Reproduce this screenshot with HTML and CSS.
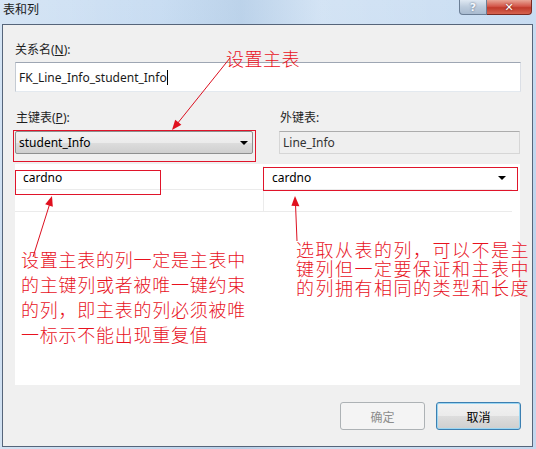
FILE: index.html
```html
<!DOCTYPE html>
<html lang="zh-CN">
<head>
<meta charset="utf-8">
<title>表和列</title>
<link rel="stylesheet" href="styles.css">
</head>
<body>
<div class="window">
  <div class="titlebar">
    <span class="title">表和列</span>
    <div class="caption-btns">
      <span class="cap-btn help">?</span>
      <span class="cap-btn close">✕</span>
    </div>
  </div>
  <div class="client">
    <label class="label">关系名(<u>N</u>):</label>
    <div class="textbox">FK_Line_Info_student_Info<span class="caret"></span></div>
    <div class="tables">
      <div class="col">
        <label class="label">主键表(<u>P</u>):</label>
        <div class="combo"><span>student_Info</span><span class="drop"></span></div>
      </div>
      <div class="col">
        <label class="label">外键表:</label>
        <div class="readonly">Line_Info</div>
      </div>
    </div>
    <div class="grid-panel">
      <div class="grid">
        <div class="cell">cardno</div>
        <div class="cell cell-combo"><span>cardno</span><span class="drop"></span></div>
        <div class="cell"></div>
        <div class="cell"></div>
      </div>
    </div>
    <div class="buttons">
      <button class="btn btn-disabled" disabled>确定</button>
      <button class="btn btn-default">取消</button>
    </div>
  </div>

  <div class="mark mark-pk"></div>
  <div class="mark mark-left"></div>
  <div class="mark mark-right"></div>

  <svg class="arrows" width="536" height="449" viewBox="0 0 536 449">
    <g stroke="#dc1020" stroke-width="1" fill="none">
      <line x1="230" y1="58" x2="177" y2="124"/>
      <line x1="33" y1="257" x2="50" y2="203"/>
      <line x1="297" y1="241" x2="295.5" y2="204"/>
    </g>
    <g fill="#e0101e">
      <polygon points="172,130 181.4,124.7 175.2,119.7"/>
      <polygon points="52,196 52.8,206.7 45.2,204.3"/>
      <polygon points="295,196 299.4,206.2 291.4,205.8"/>
    </g>
  </svg>

  <div class="note note-top">设置主表</div>
  <div class="note note-left">
    <div class="note-line">设置主表的列一定是主表中</div>
    <div class="note-line">的主键列或者被唯一键约束</div>
    <div class="note-line">的列，即主表的列必须被唯</div>
    <div class="note-line">一标示不能出现重复值</div>
  </div>
  <div class="note note-right">
    <div class="note-line">选取从表的列，可以不是主</div>
    <div class="note-line">键列但一定要保证和主表中</div>
    <div class="note-line">的列拥有相同的类型和长度</div>
  </div>
</div>
</body>
</html>
```
FILE: styles.css
```css
* { box-sizing: border-box; }
html, body { margin: 0; padding: 0; }
body {
  width: 536px;
  height: 449px;
  overflow: hidden;
  background: #c4d8ee;
  font-family: "Noto Sans", "Noto Sans CJK SC", sans-serif;
  font-size: 12px;
  color: #000;
}
.window {
  position: relative;
  width: 536px;
  height: 449px;
  background:
    linear-gradient(90deg, rgba(255,255,255,0.25) 0%, rgba(255,255,255,0) 30%, rgba(150,180,210,0.25) 45%, rgba(255,255,255,0.2) 60%, rgba(255,255,255,0) 100%),
    linear-gradient(180deg, #c9ddf2 0%, #bcd3ec 60%, #c4d8ee 100%);
}
.titlebar {
  height: 24px;
  display: flex;
  justify-content: space-between;
  align-items: flex-start;
  padding-left: 3px;
}
.title {
  font-family: "Noto Sans CJK SC", sans-serif;
  font-size: 12px;
  line-height: 18px;
  color: #1a1a1a;
}
.caption-btns {
  display: flex;
  margin-right: 4px;
}
.cap-btn {
  height: 15px;
  display: flex;
  align-items: center;
  justify-content: center;
  color: #fff;
  font-family: "DejaVu Sans", sans-serif;
  font-weight: bold;
  border: 1px solid #6b7e95;
  border-top: none;
}
.help {
  width: 28px;
  border-radius: 0 0 0 4px;
  background: linear-gradient(180deg, #dfe8f2 0%, #bccbdc 50%, #a9bbd0 100%);
  font-size: 11px;
  color: #f4f7fb;
  text-shadow: 0 0 2px #4a5d78;
}
.close {
  width: 45px;
  border-left: none;
  border-color: #7a2a22;
  border-radius: 0 0 4px 0;
  background: linear-gradient(180deg, #e8a697 0%, #d3574a 45%, #c03a2b 55%, #d66350 100%);
  font-size: 11px;
  text-shadow: 0 0 2px #5a1008;
}
.client {
  margin-left: 2px;
  width: 531px;
  height: 423px;
  border: 1px solid #56657a;
  background: #f0f0f0;
  padding: 17px 11px 16px 12px;
  display: flex;
  flex-direction: column;
}
.label {
  display: block;
  height: 16px;
  line-height: 16px;
  font-size: 12px;
  color: #1e1e1e;
}
.label u { text-decoration: underline; }
.textbox {
  margin-top: 4px;
  height: 30px;
  background: #fff;
  border: 1px solid #abadb3;
  border-top-color: #9ea6b3;
  border-left-color: #c5cbd3;
  border-right-color: #dbdfe6;
  border-bottom-color: #e3e9ef;
  padding-left: 3px;
  display: flex;
  align-items: center;
  font-size: 12px;
  color: #1a1a1a;
}
.caret {
  display: inline-block;
  width: 1px;
  height: 15px;
  background: #000;
}
.tables {
  margin-top: 18px;
  display: grid;
  grid-template-columns: 238px 241px;
  column-gap: 26px;
}
.tables .label { padding-left: 1px; }
.combo {
  margin-top: 5px;
  height: 23px;
  border: 1px solid #8e8f8f;
  border-radius: 2px;
  background: linear-gradient(180deg, #f2f2f2 0%, #ebebeb 50%, #dddddd 51%, #cfcfcf 100%);
  display: flex;
  align-items: center;
  justify-content: space-between;
  padding: 0 4px 0 3px;
  color: #000;
}
.drop {
  width: 0;
  height: 0;
  border-left: 4px solid transparent;
  border-right: 4px solid transparent;
  border-top: 4px solid #000;
}
.readonly {
  margin-top: 5px;
  height: 23px;
  border: 1px solid #d6d6d6;
  border-top-color: #acacac;
  background: #efefef;
  display: flex;
  align-items: center;
  padding-left: 3px;
  color: #333;
}
.grid-panel {
  margin-top: 10px;
  height: 221px;
  width: 505px;
  background: #fff;
  padding-top: 2px;
}
.grid {
  width: 497px;
  display: grid;
  grid-template-columns: 248px 249px;
  grid-template-rows: 24px 22px;
}
.cell {
  border-bottom: 1px solid #ebebeb;
  display: flex;
  align-items: center;
  padding-left: 8px;
  color: #000;
}
.cell:nth-child(2n) { border-left: 1px solid #ebebeb; }
.cell-combo {
  justify-content: space-between;
  padding-right: 6px;
}
.buttons {
  margin-top: 17px;
  display: flex;
  justify-content: flex-end;
  gap: 11px;
}
.btn {
  width: 85px;
  height: 28px;
  font-family: "Noto Sans CJK SC", sans-serif;
  font-size: 12px;
  border-radius: 3px;
  padding: 0;
}
.btn-disabled {
  border: 1px solid #adb2b5;
  background: #f4f4f4;
  color: #8d8d8d;
}
.btn-default {
  border: 1px solid #3c7fb1;
  box-shadow: inset 0 0 0 1px #9bd6f2;
  background: linear-gradient(180deg, #f2f2f2 0%, #ebebeb 50%, #dddddd 51%, #cfcfcf 100%);
  color: #000;
}
.mark {
  position: absolute;
  border: 1px solid #e0142a;
}
.mark-pk { left: 13px; top: 130px; width: 243px; height: 32px; }
.mark-left { left: 15px; top: 170px; width: 146px; height: 25px; }
.mark-right { left: 263px; top: 167px; width: 255px; height: 24px; }
.arrows {
  position: absolute;
  left: 0;
  top: 0;
  pointer-events: none;
}
.note {
  position: absolute;
  font-family: "Noto Sans CJK SC", sans-serif;
  font-size: 18px;
  font-weight: 300;
  color: #e8121e;
  white-space: nowrap;
}
.note-top { left: 226px; top: 48px; line-height: 20px; letter-spacing: 0.5px; }
.note-left { left: 21px; top: 247px; letter-spacing: 0.75px; }
.note-left .note-line { height: 25px; line-height: 25px; }
.note-right { left: 296px; top: 240px; letter-spacing: 1.5px; }
.note-right .note-line { height: 19px; line-height: 19px; }
```
